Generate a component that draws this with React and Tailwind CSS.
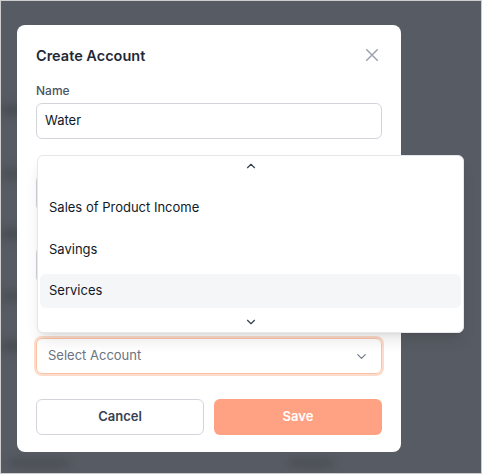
import React from "react";
import { ChevronDown, ChevronUp } from "lucide-react";

function Field({ label, hidden = false, children, className = "" }) {
  return (
    <div className={className}>
      <div className={"text-xs leading-4 font-medium text-[#4b5563] " + (hidden ? "invisible" : "")}>{label}</div>
      <div className="mt-1">{children}</div>
    </div>
  );
}

export default function App() {
  return (
    <div
      className="relative w-[482px] h-[474px] overflow-hidden border border-[#cdcdcd] bg-[#575b63]"
      style={{ fontFamily: "Inter, 'Noto Sans', sans-serif" }}
    >
      {/* blurred page behind the overlay */}
      <div className="absolute left-0 top-[104px] w-[40px] h-[10px] bg-[#474b52] blur-[5px]" />
      <div className="absolute left-0 top-[168px] w-[40px] h-[10px] bg-[#4a4e55] blur-[5px]" />
      <div className="absolute left-0 top-[228px] w-[40px] h-[10px] bg-[#474b52] blur-[5px]" />
      <div className="absolute left-0 top-[290px] w-[40px] h-[10px] bg-[#4a4e55] blur-[5px]" />
      <div className="absolute left-0 top-[340px] w-[40px] h-[10px] bg-[#474b52] blur-[5px]" />
      <div className="absolute left-[8px] top-[458px] w-[60px] h-[8px] bg-[#4a4e55] blur-[4px]" />
      <div className="absolute left-[288px] top-[458px] w-[44px] h-[8px] bg-[#4a4e55] blur-[4px]" />

      <div className="relative ml-4 mt-6 w-[384px] rounded-lg bg-white px-[19px] pt-[20px] pb-[17px]">
        <div className="flex h-[22px] items-center justify-between">
          <div className="text-[14.5px] font-semibold text-[#1f2937]">Create Account</div>
          <div className="-mt-[2px] flex h-5 w-5 items-center justify-center">
            <svg width="12" height="12" viewBox="0 0 12 12" fill="none" stroke="#9ca3af" strokeWidth="1.5" strokeLinecap="round">
              <path d="M0.75 0.75L11.25 11.25M11.25 0.75L0.75 11.25" />
            </svg>
          </div>
        </div>

        <Field label="Name" className="mt-4">
          <div className="flex h-9 items-center rounded-md border border-[#d1d5db] px-2 text-[13px] text-[#111827]">
            Water
          </div>
        </Field>

        <Field label="Type" hidden className="mt-4">
          <div className="h-9 rounded-md border border-[#d1d5db]" />
        </Field>

        <Field label="Description" hidden className="mt-4">
          <div className="h-9 rounded-md border border-[#d1d5db]" />
        </Field>

        <Field label="Parent Account" hidden className="mt-[35px]">
          <div className="flex h-9 items-center justify-between rounded-md border border-[#fbc3a6] pl-[11px] pr-3 text-[13px] text-[#6b7280] ring-2 ring-[#fddccb]">
            <span>Select Account</span>
            <ChevronDown size={15} strokeWidth={1.75} color="#6b7280" />
          </div>
        </Field>

        <div className="mt-[25px] grid grid-cols-2 gap-2.5">
          <button className="h-9 rounded-md border border-[#d1d5db] bg-white text-[13px] font-semibold text-[#374151]">
            Cancel
          </button>
          <button className="h-9 rounded-md bg-[#ffa283] text-[13px] font-semibold text-white">
            Save
          </button>
        </div>

        {/* open select menu */}
        <div className="absolute left-[20px] top-[130px] flex h-[178px] w-[427px] flex-col rounded-md border border-[#e5e7eb] bg-white shadow-lg">
          <div className="flex h-5 items-center justify-center">
            <ChevronUp size={14} strokeWidth={2} color="#374151" />
          </div>
          <div className="flex flex-1 flex-col gap-[7.5px] px-0.5 pt-[15px]">
            <div className="flex h-[34px] items-center rounded-md px-[9px] text-[13px] text-[#111827]">
              Sales of Product Income
            </div>
            <div className="flex h-[34px] items-center rounded-md px-[9px] text-[13px] text-[#111827]">
              Savings
            </div>
            <div className="flex h-[34px] items-center rounded-md bg-[#f5f6f8] px-[9px] text-[13px] text-[#111827]">
              Services
            </div>
          </div>
          <div className="flex h-5 items-center justify-center">
            <ChevronDown size={14} strokeWidth={2} color="#374151" />
          </div>
        </div>
      </div>
    </div>
  );
}
